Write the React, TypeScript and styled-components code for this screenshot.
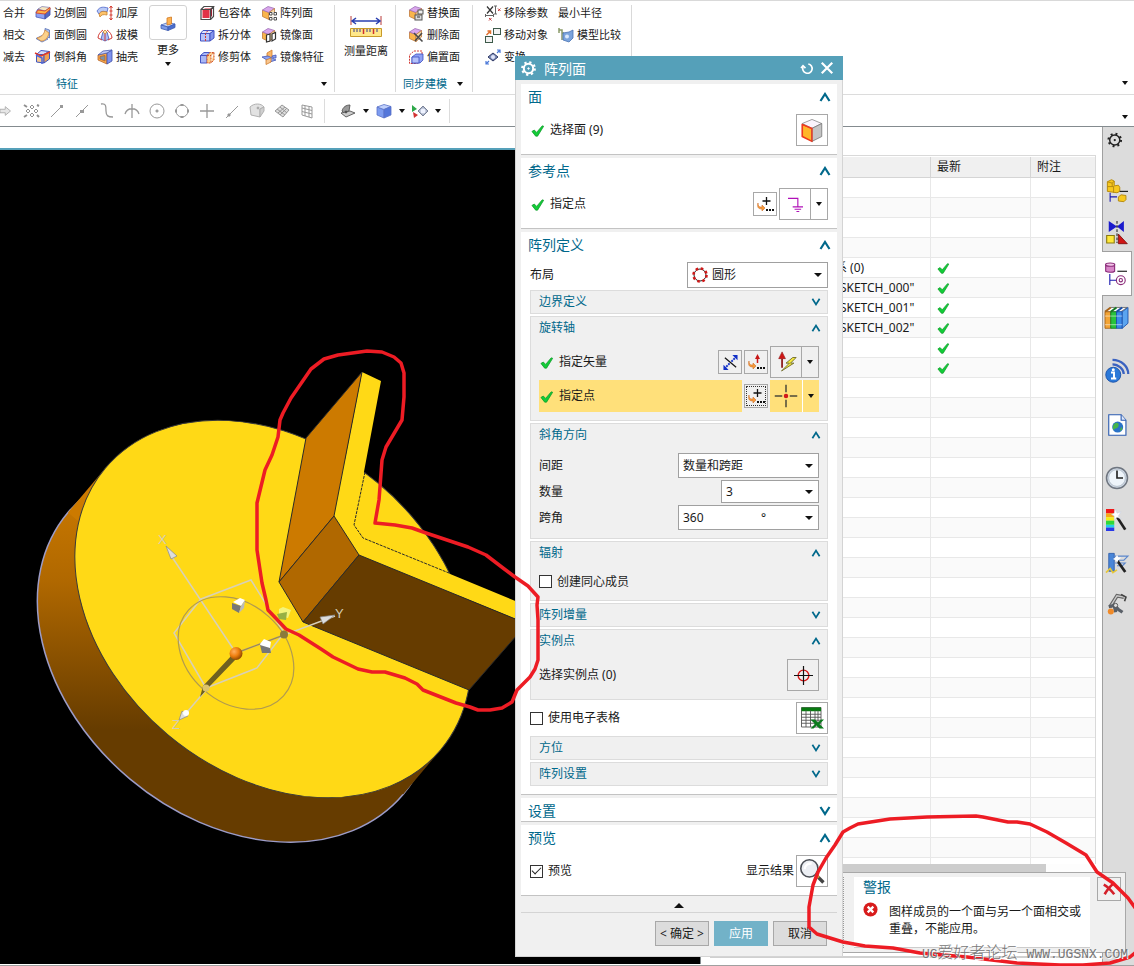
import React from 'react';
import styled, { createGlobalStyle, css } from 'styled-components';

const GlobalStyle = createGlobalStyle`
  *, *::before, *::after { box-sizing: border-box; }
  html, body { margin: 0; padding: 0; }
  body {
    background: #fff;
    color: #1a1a1a;
    font-family: "Noto Sans", "Noto Sans CJK SC", sans-serif;
    font-size: 12px;
    line-height: 16px;
    overflow: hidden;
  }
  button, input, select { font: inherit; color: inherit; margin: 0; padding: 0; }
  svg { display: block; flex: none; }
`;

/* ---------- glyphs ---------- */

type GlyphProps = { name: string; size?: number };

const cube = (front: string, top: string, side: string, line: string) => (
  <g stroke={line} strokeLinejoin="round">
    <path d="M1.5 5.5 9 5.5 9 14 1.5 13Z" fill={front} />
    <path d="M1.5 5.5 6 1.5 14.5 2.5 9 5.5Z" fill={top} />
    <path d="M9 5.5 14.5 2.5 14.5 10 9 14Z" fill={side} />
  </g>
);

const hexCube = (
  <g strokeLinejoin="round" stroke="#c07a3a" strokeWidth=".8">
    <path d="M1.5 5 8 7.5V14.5L1.5 11.5Z" fill="#f9b54c" />
    <path d="M1.5 5 7 1.5 13.5 3.5 8 7.5Z" fill="#d9a6ec" stroke="#a070b8" />
    <path d="M8 7.5 13.5 3.5V10L8 14.5Z" fill="#f5d9a8" />
  </g>
);

const dialogArrow = (
  <g>
    <path d="M1 7C1 11 3 11 5 11V9L8 12 5 15V13C1 13 0 11 1 7Z" fill="#f59a3a" stroke="#d0702a" strokeWidth=".6" />
    <path d="M9 14H11M12 14H14M15 14H17" stroke="#111" strokeWidth="2" />
  </g>
);

const GLYPHS: Record<string, React.ReactNode> = {
  edgeBlend: (
    <g>
      <path d="M1 7 3 4 10 5 10 14 1 12Z" fill="#8fa2f2" stroke="#4a5cb8" strokeWidth=".8" />
      <path d="M10 7 15 3V10L10 14Z" fill="#5468c0" stroke="#3c4ca8" strokeWidth=".8" />
      <path d="M3 4 7 1.5 15 2.5 10 6Z" fill="#f5e6c0" stroke="#8a8ab8" strokeWidth=".8" />
      <path d="M1 8 3 5 10 6 15 2.5V4.5L10 9Z" fill="#ffb24a" stroke="#d4442e" strokeWidth=".9" />
    </g>
  ),
  faceBlend: (
    <g>
      <path d="M10 1.5 14.5 3 14.5 11 10 9Z" fill="#a9c0ee" stroke="#5570b8" strokeWidth=".8" />
      <path d="M1 11.5 7 8.5 13 12 7 15Z" fill="#c6d3f2" stroke="#5570b8" strokeWidth=".8" />
      <path d="M2 11C7 10 9 7 10 3L14 6C13 11 10 14 6 14Z" fill="#fbd18a" stroke="#d58a3a" strokeWidth=".8" />
    </g>
  ),
  chamfer: (
    <g>
      {cube('#f6c88c', '#d5dcf8', '#f0a050', '#3f55c0')}
      <path d="M0 4 6 7 15 3" fill="none" stroke="#e03a2a" strokeWidth="1.5" />
      <path d="M1 6 7 9V15" fill="none" stroke="#4e66d8" strokeWidth="1.5" />
    </g>
  ),
  thicken: (
    <g>
      <path d="M0 6C3 1 7 2 11 3L10 7C6 6 4 6 2 9Z" fill="#b9c9f6" stroke="#4a63c8" strokeWidth=".8" />
      <path d="M2 9C4 6 6 6 10 7V10C6 9 4 10 3 12Z" fill="#ffc46a" stroke="#c9812a" strokeWidth=".8" />
      <path d="M14 1V15M12.5 3 14 1 15.5 3M12.5 13 14 15 15.5 13M12.5 6H15.5M12.5 10H15.5" fill="none" stroke="#d43a2f" />
    </g>
  ),
  draft: (
    <g>
      <path d="M4 12 6 5 10 5 12 12 8 14Z" fill="#aebcf4" stroke="#4357b5" strokeWidth=".8" />
      <path d="M6 5 8 3 10 5 8 7Z" fill="#ffe0a8" stroke="#c98430" strokeWidth=".8" />
      <path d="M6 3C3 5 1 8 1 11L5 13M10 3C13 5 15 8 15 11L11 13M8 7V14" fill="none" stroke="#d23b35" />
    </g>
  ),
  shell: (
    <g strokeWidth=".8">
      <path d="M1 6 10 4V15L1 11Z" fill="#f9a94c" stroke="#b8662a" />
      <path d="M10 4 15 1V12L10 15Z" fill="#7f92ee" stroke="#4050a8" />
      <path d="M1 6 6 2 15 1 10 4Z" fill="#c2ccf8" stroke="#4a5ab0" />
      <path d="M3 7.5 8 6.5V12L3 10Z" fill="#7c93a8" stroke="#b8662a" />
    </g>
  ),
  more: (
    <g strokeWidth=".8">
      <path d="M1 10 8 7.5 15 9 8 12Z" fill="#c6d6fa" stroke="#4a6cc0" />
      <path d="M1 10 8 12V15.5L1 13.5Z" fill="#7d9be8" stroke="#3d5cb0" />
      <path d="M8 12 15 9V12.5L8 15.5Z" fill="#4b6fcf" stroke="#3d5cb0" />
      <path d="M7 3 11.500 2V9L7 10Z" fill="#ffb24f" stroke="#d07a25" />
    </g>
  ),
  bbox: (
    <g>
      <rect x="3.500" y="5" width="7" height="8" fill="#e23347" />
      <path d="M4 5 6 3H13L11 5Z" fill="#f08a96" />
      <path d="M11 5 13 3V11L11 13Z" fill="#a01c30" />
      <path d="M2 4.500H11.500V14.500H2ZM2 4.500 5 1.500H14.500L11.500 4.500M14.500 1.500V11.500L11.500 14.500" fill="none" stroke="#4a4a4a" strokeWidth="1.200" />
    </g>
  ),
  split: (
    <g stroke="#4455c4">
      <path d="M1.5 6.500H11V14H1.500Z" fill="#b8c4fa" />
      <path d="M1.500 6.500 4 3.500H15L11 6.500Z" fill="#dfe5ff" />
      <path d="M11 6.500 15 3.500V11L11 14Z" fill="#8394ec" />
      <path d="M6.500 14V6.500L9 3.500" fill="none" stroke="#d43a2f" strokeDasharray="2 1" />
    </g>
  ),
  trim: (
    <g>
      <path d="M1.500 6.500H8V14H1.500ZM1.500 6.500 5 3.500H11L8 6.500Z" fill="#a9b7f6" stroke="#4455c4" />
      <path d="M8 6.500H12V14H8ZM8 6.500 11 3.500H15L12 6.500M15 3.500V11L12 14" fill="#ffd08a" stroke="#d0552f" strokeDasharray="2 1" />
    </g>
  ),
  patternFace: (
    <g>
      {hexCube}
      <path d="M8 7H16V16H8Z" fill="#fff" opacity=".8" />
      <path d="M8.500 7.500H11V10H8.500ZM13 7.500H15.500V10H13ZM8.500 12.500H11V15H8.500ZM13 12.500H15.500V15H13Z" fill="#fff" stroke="#3c3c3c" strokeWidth=".9" />
    </g>
  ),
  mirrorFace: (
    <g>
      {hexCube}
      <path d="M5.500 8 9 7V14L5.500 15ZM11 7 14.500 5.500V12L11 14Z" fill="#fff" stroke="#333" strokeWidth="1.200" />
    </g>
  ),
  mirrorFeature: (
    <g strokeWidth=".8">
      <path d="M6 4 11 1V8L6 10Z" fill="#fbb868" stroke="#d07c2c" />
      <path d="M1 8 7 7 15 11 9 13Z" fill="#8ea4f0" stroke="#4256b6" />
      <path d="M5 11 10 9V13L5 15.500Z" fill="#f7c58e" stroke="#d07c2c" />
      <path d="M11 7 15 6V9L12 9Z" fill="#8ea4f0" stroke="#4256b6" />
    </g>
  ),
  replaceFace: (
    <g>
      {hexCube}
      <rect x="7" y="10" width="7" height="5" fill="#ddd" stroke="#555" />
      <rect x="10" y="5" width="5" height="4" fill="#eee" stroke="#555" />
      <path d="M9 12H12" stroke="#333" />
    </g>
  ),
  deleteFace: (
    <g>
      {hexCube}
      <path d="M6 6 14.500 14.500M14 6 7 14" stroke="#4a4a4a" strokeWidth="1.600" />
    </g>
  ),
  offsetFace: (
    <g>
      <path d="M1.500 6 6 2H14V10L9 14.500H1.500Z" fill="none" stroke="#d23b35" strokeDasharray="2 1" />
      <path d="M4 8 8 5H15V11L12 14H4Z" fill="#8fa0f4" stroke="#3d4fc0" strokeWidth=".8" />
      <path d="M4 8H11V14H4Z" fill="#b3c0fa" stroke="#3d4fc0" strokeWidth=".8" />
    </g>
  ),
  removeParam: (
    <g fill="none">
      <path d="M2 1.500 8 8.500M8 1.500 2 8.500" stroke="#333" strokeWidth="1.200" />
      <path d="M10.500 1V9M9 1H12M9 9H12M0 10.500H9M.5 9V12M8.500 9V12" stroke="#666" />
      <path d="M13 3.500 15.500 6M15.500 3.500 13 6M4 13 6.500 15.500M6.500 13 4 15.500" stroke="#c63a3a" />
    </g>
  ),
  moveObject: (
    <g>
      <rect x="8.500" y="1.500" width="7" height="6" fill="#f2f2f2" stroke="#3d5a4a" />
      <rect x=".5" y="9.500" width="7" height="6" fill="#f2f2f2" stroke="#3d5a4a" />
      <path d="M1.500 8 5.500 4M2.500 4H5.500V7" fill="none" stroke="#e2702f" strokeWidth="1.500" />
    </g>
  ),
  transform: (
    <g>
      <path d="M3 8 8 4 13 8 8 12Z" fill="#7c8cb8" stroke="#2f3a66" />
      <circle cx="8" cy="8" r="2" fill="#dfe5fa" />
      <path d="M12 4 15 1M12 1H15V4M4 12 1 15M1 12V15H4" fill="none" stroke="#4a78d8" strokeWidth="1.200" />
    </g>
  ),
  compare: (
    <g>
      <path d="M1 3H4V13M1 1V6M4 6H6" stroke="#8a9a6a" fill="none" strokeWidth="1.500" />
      <path d="M5 6 11 5 15 3V11L11 15 5 13Z" fill="#7ba4dd" stroke="#4a73b4" strokeWidth=".8" />
      <circle cx="9" cy="9.500" r="2" fill="#dbe9fb" />
    </g>
  ),
  snapArrow: <path d="M0 6H6V3L12 8 6 13V10H0Z" fill="#e6e6e6" stroke="#aaa" />,
  snapCluster: (
    <g fill="none" stroke="#8f8f8f">
      <path d="M8 2 10 4 8 6 6 4ZM8 10 10 12 8 14 6 12ZM4 6 6 8 4 10 2 8ZM12 6 14 8 12 10 10 8Z" />
      <path d="M0 2 3 4M0 14 3 12M13 2 15 3M15 14 13 12" strokeWidth="2" />
    </g>
  ),
  snapEnd: <g stroke="#999" fill="#8a8a8a"><path d="M2 14 13 3" /><path d="M12 3H13V4H12Z" strokeWidth="2" /></g>,
  snapMid: <g stroke="#999" fill="#8a8a8a"><path d="M2 14 14 2" /><path d="M7 8H9V9H7Z" strokeWidth="2" /></g>,
  snapCurve: <path d="M2 1C7 0 7 3 7 8S9 14 14 14" fill="none" stroke="#999" strokeWidth="1.300" />,
  snapInter: <g stroke="#999" fill="none" strokeWidth="1.300"><path d="M8 1V15M1 11C3 4 13 4 15 11" /></g>,
  snapCenter: <g stroke="#999" fill="none"><circle cx="8" cy="8" r="7" /><path d="M8 6.500V9.500M6.500 8H9.500" strokeWidth="1.500" /></g>,
  snapQuad: <g stroke="#999" fill="none"><circle cx="8" cy="8" r="6" /><path d="M8 1V3M8 13V15M1 8H3M13 8H15" strokeWidth="3" /></g>,
  snapPlus: <path d="M8 1V15M1 8H15" stroke="#999" strokeWidth="1.300" />,
  snapOn: <g stroke="#999" fill="#8a8a8a"><path d="M2 15 14 3" /><path d="M4 11H6V13H4Z" /></g>,
  snapFace: (
    <g fill="#e2e2e2" stroke="#b0b0b0">
      <path d="M1 4C5 0 12 0 15 4L11 6V14L2 12Z" />
      <path d="M11 6 15 4 15 8 11 14Z" fill="#cfcfcf" />
      <circle cx="9" cy="5" r="1" fill="#888" />
    </g>
  ),
  snapMesh: (
    <g fill="#ddd" stroke="#999">
      <path d="M1 8 8 2 15 7 9 14Z" />
      <path d="M3 6 11 12M6 4 13 10M4 10 11 4M6 12 13 5" fill="none" />
    </g>
  ),
  snapGrid: <path d="M3 2 13 4V15L3 12ZM6 3V13M10 3.500V14M3 5 13 7.500M3 8.500 13 11" fill="none" stroke="#999" />,
  viewPlane: (
    <g stroke="#555" strokeWidth=".9">
      <path d="M2 8C3 4 6 2 10 2L9 8 4 10Z" fill="#9a9a9a" />
      <path d="M1 10 10 8 15 10 6 14Z" fill="#ccc" />
      <circle cx="6" cy="9" r="1" fill="#333" />
    </g>
  ),
  blueBox: (
    <g strokeLinejoin="round" stroke="#5a72c8" strokeWidth=".8">
      <path d="M1 4 8 6.500V15L1 12Z" fill="#7d9cf0" />
      <path d="M1 4 8 1.500 15 3.500 8 6.500Z" fill="#c0d0fb" />
      <path d="M8 6.500 15 3.500V12L8 15Z" fill="#5376da" />
    </g>
  ),
  visibility: (
    <g>
      <path d="M0 2 5 6 0 9Z" fill="#2ea84a" />
      <path d="M1 9 6 12 2 15Z" fill="#d23232" />
      <path d="M6 8 11 3 16 8 11 13Z" fill="#aab3c8" stroke="#7a8298" />
      <circle cx="11" cy="8" r="2.500" fill="#eef2ff" />
    </g>
  ),
  check: <path d="M1 9 3.500 7.500 6 10 12 3 13.500 3.500 7 14 5 14Z" fill="#12cc38" stroke="#0d9a28" strokeWidth=".8" strokeLinejoin="round" />,
  ring: (
    <g>
      <circle cx="8" cy="8" r="6" fill="none" stroke="#222" />
      <circle cx="8" cy="8" r="6.500" fill="none" stroke="#d01818" strokeWidth="2.600" strokeDasharray="2.500 2.600" />
    </g>
  ),
  pointDialog: (
    <g>
      <path d="M9.500 1V9M5.500 5H13.500" stroke="#111" strokeWidth="1.300" />
      {dialogArrow}
    </g>
  ),
  vectorDialog: (
    <g>
      <path d="M9.500 2V9" stroke="#c81818" strokeWidth="1.500" />
      <path d="M9.500 0 12 5H7Z" fill="#c81818" />
      {dialogArrow}
    </g>
  ),
  reverse: (
    <g>
      <path d="M2 3 14 13" stroke="#111" strokeWidth="1.300" />
      <path d="M9 7 14 2M7 9 2 14" stroke="#1230c8" strokeWidth="2" strokeDasharray="2 1" />
      <path d="M15.500 0V5.500L10 0ZM.5 16V10.500L6 16Z" fill="#1230c8" />
    </g>
  ),
  inferVector: (
    <g>
      <path d="M4.500 5V13" stroke="#8a1010" strokeWidth="1.500" />
      <path d="M4.500-1 7.500 5H1.500Z" fill="#d01616" stroke="#8a1010" strokeWidth=".5" />
      <path d="M14 4 8 9H11L4 16 15 9H12L17 4Z" fill="#f6ea3c" stroke="#6e6a2a" strokeWidth=".8" />
    </g>
  ),
  inferPoint: (
    <path d="M0 1.500H10.500V10.500M5 10.500H16M7 13H14M9 15.500H12" fill="none" stroke="#b010b8" strokeWidth="1.200" />
  ),
  crossPoint: (
    <g>
      <path d="M8-1V5M8 11V17M-1 8H5M11 8H17" stroke="#4c4a3a" strokeWidth="1.200" />
      <circle cx="8" cy="8" r="1.800" fill="#d41a1a" />
    </g>
  ),
  target: (
    <g fill="none">
      <circle cx="8" cy="8" r="4.500" stroke="#d41a1a" strokeWidth="1.200" />
      <path d="M8 0V16M0 8H16" stroke="#111" />
    </g>
  ),
  faceCube: (
    <g strokeLinejoin="round">
      <path d="M2 4.500 8 7V15L2 12Z" fill="#ffb62a" stroke="#ee3a20" />
      <path d="M2 4 8 1.500 14 4 8 7Z" fill="#faf4fc" stroke="#8a8a8a" strokeWidth=".5" />
      <path d="M8 7 14 4V12L8 15Z" fill="#c4c4c4" stroke="#777" strokeWidth=".5" />
      <path d="M2 4.500 8 7V15" fill="none" stroke="#ee3a20" strokeWidth=".8" />
    </g>
  ),
  sheet: (
    <g>
      <path d="M1 1H14V14H1Z" fill="#fff" stroke="#555" strokeWidth=".6" />
      <path d="M1 1H14V3.500H1Z" fill="#087a10" />
      <path d="M1 5.500H14M1 7.500H14M1 9.500H14M1 11.500H14M4 3V14M7 3V14M10 3V14M12 3V14" stroke="#555" strokeWidth=".6" />
      <path d="M7 9H10L12 11 14 9H16L13 12 16 15H13L11 13 9 15H7L10 12Z" fill="#0a7a1c" />
    </g>
  ),
  magnifier: (
    <g>
      <path d="M10.500 10.500 15 15" stroke="#444" strokeWidth="2.200" />
      <path d="M10 10 12 12" stroke="#c9a23a" strokeWidth="2" />
      <circle cx="6" cy="6" r="5.500" fill="#eceff4" stroke="#4a4e55" />
      <path d="M3 6.500C3 4 5.500 2.500 7.500 3" fill="none" stroke="#fff" strokeWidth="1.500" />
    </g>
  ),
  assembly: (
    <g>
      <path d="M1 2 4 .5 6 1.500V5L9 4.500 10 6V9L8 10 1 9Z" fill="#f7c81e" stroke="#b58a10" strokeWidth=".7" />
      <path d="M1 5.500H5.500V10M5.500 5.500 6 5M1 2 4.500 3V5.500M4.500 3 6 1.500" fill="none" stroke="#b58a10" strokeWidth=".7" />
      <path d="M10 9H16" stroke="#111" strokeWidth=".8" />
      <path d="M3 10V16.500M3 13H8" stroke="#1a1ab0" strokeWidth=".8" />
      <path d="M9 13 11 11.500 14.500 12V15L13 16.500 9 16Z" fill="#f7c81e" stroke="#b58a10" strokeWidth=".7" />
    </g>
  ),
  constraint: (
    <g>
      <path d="M2 0 8 4 2 8ZM13 0 8 4 13 8Z" fill="#1a1acc" />
      <path d="M8 0V16" stroke="#111" strokeWidth=".7" strokeDasharray="2 1" />
      <path d="M.5 10.500H6V16H.5Z" fill="#ffe83a" stroke="#8a7a10" strokeWidth=".8" />
      <path d="M9 9.500 15.500 16.500H9Z" fill="#d01616" stroke="#7a0c0c" strokeWidth=".6" />
    </g>
  ),
  partNav: (
    <g>
      <path d="M.5 1V6C2 7 6 7 7 6V1Z" fill="#d886c8" stroke="#8a2a78" strokeWidth=".8" />
      <ellipse cx="3.750" cy="1.200" rx="3.250" ry="1.200" fill="#f2c4e8" stroke="#8a2a78" strokeWidth=".8" />
      <path d="M9 6H16" stroke="#111" strokeWidth=".8" />
      <path d="M3.500 8V16M3.500 12.500H8" stroke="#1a1ab0" strokeWidth=".8" />
      <circle cx="11.500" cy="12.500" r="3.200" fill="none" stroke="#8a2a78" strokeWidth=".8" />
      <circle cx="11.500" cy="12.500" r="1.200" fill="none" stroke="#8a2a78" strokeWidth=".8" />
    </g>
  ),
  books: (
    <g strokeWidth=".6">
      <path d="M4 1H15.500L11 4H0Z" fill="#fff" stroke="#666" />
      <path d="M0 4H4V15.500H0Z" fill="#f2a436" stroke="#a8641a" />
      <path d="M4 4H8V15.500H4Z" fill="#28c23c" stroke="#147a22" />
      <path d="M8 4H12V15.500H8Z" fill="#3a8ae8" stroke="#1a4ea8" />
      <path d="M12 4 16 1V12L12 15.500Z" fill="#5aa4f0" stroke="#1a4ea8" />
      <path d="M0 4 4 1" stroke="#a8641a" strokeWidth="1.400" />
      <path d="M4 4 8 1" stroke="#147a22" strokeWidth="1.400" />
      <path d="M8 4 12 1" stroke="#1a4ea8" strokeWidth="1.400" />
      <path d="M0 7H12M0 13H12" stroke="#fff" opacity=".6" />
    </g>
  ),
  infoWave: (
    <g>
      <path d="M5 .5C11 .5 15.500 5 15.500 10M5 3.500C9 3.500 12.500 7 12.500 10" fill="none" stroke="#3a62c0" strokeWidth="1.500" />
      <circle cx="5.500" cy="10.500" r="5" fill="#2a78d8" stroke="#1a50a8" strokeWidth=".6" />
      <path d="M4 9H6V13H7M4 13H7.500" fill="none" stroke="#fff" strokeWidth="1.300" />
      <circle cx="5.500" cy="7.200" r="1" fill="#fff" />
    </g>
  ),
  webDoc: (
    <g>
      <path d="M2 .5H11L14.500 4.500V15.500H2Z" fill="#fff" stroke="#2a5ab0" strokeWidth=".8" />
      <path d="M11 .5V4.500H14.500" fill="#dfe8f8" stroke="#2a5ab0" strokeWidth=".8" />
      <circle cx="8.500" cy="9.500" r="4" fill="#2a72c8" />
      <path d="M6 7C8 5.500 10 7 9 9S6 10 5.500 12C4.500 10 5 8 6 7ZM11 9 12 11 10 12.500Z" fill="#46b44a" />
    </g>
  ),
  clock: (
    <g>
      <circle cx="8" cy="8" r="7" fill="#cfd8e4" stroke="#6f7680" />
      <circle cx="8" cy="8" r="5.600" fill="#eef4fa" stroke="#a8b4c0" strokeWidth=".5" />
      <path d="M8 3V8H12" fill="none" stroke="#222" strokeWidth="1.100" />
    </g>
  ),
  spectrum: (
    <g>
      <path d="M0 0H6V3.200H0Z" fill="#f01818" />
      <path d="M0 3.200H6V6H0Z" fill="#f8a818" />
      <path d="M0 6H6V8.500H0Z" fill="#f4f018" />
      <path d="M0 8.500H6V11.500H0Z" fill="#30d838" />
      <path d="M0 11.500H6V13.500H0Z" fill="#20d0e8" />
      <path d="M0 13.500H6V16H0Z" fill="#2838e8" />
      <path d="M7.500 5 14 15" stroke="#222" strokeWidth="2" />
      <path d="M7 0 8 3 11 2 9 5 11 7 8 6 6 8 6 5 4 4 6 3Z" fill="#fff" stroke="#c8d0e0" strokeWidth=".4" />
    </g>
  ),
  wandTower: (
    <g>
      <path d="M2 1H6V14H2Z" fill="#4a86d8" stroke="#2a5aa8" strokeWidth=".6" />
      <path d="M6 3H16L13 6H8M6 8H14L12 10H8" fill="none" stroke="#5a86cc" strokeWidth=".8" />
      <path d="M0 15 3 12 5 15 8 13" stroke="#e8c838" fill="none" strokeWidth="1.200" />
      <path d="M8 6 14 14.500" stroke="#222" strokeWidth="2" />
      <path d="M8 2 9 4 11 4 9 6 8 8 7 6 5 5 7 4Z" fill="#fff" />
    </g>
  ),
  robot: (
    <g>
      <path d="M3 10 8 2 13 3" fill="none" stroke="#666" strokeWidth="2.600" />
      <path d="M3 10 8 2 13 3" fill="none" stroke="#ccc" strokeWidth="1" />
      <path d="M11 1 14.500 3 13.500 6" fill="none" stroke="#444" strokeWidth="1.200" />
      <path d="M2 10 6 9 9 12 12 14M6 9 7 14" fill="none" stroke="#5a6068" strokeWidth="2.400" />
      <circle cx="3.500" cy="13.500" r="2.200" fill="#f08a28" />
      <circle cx="7" cy="9" r="1.500" fill="#ddd" stroke="#444" strokeWidth=".6" />
    </g>
  ),
  error: (
    <g>
      <circle cx="8" cy="8" r="7.500" fill="#d81c1c" />
      <path d="M5 5 11 11M11 5 5 11" stroke="#fff" strokeWidth="2.500" />
    </g>
  ),
  redX: <path d="M2 3C6 5 10 9 14 14M13 2C9 5 6 9 3 14" fill="none" stroke="#d4202a" strokeWidth="3" />,
  gear: (
    <g fill="none" stroke="currentColor">
      <circle cx="8" cy="8" r="5" strokeWidth="2.200" />
      <circle cx="8" cy="8" r="6.800" strokeWidth="2.200" strokeDasharray="2.400 2.940" />
      <circle cx="8" cy="8" r=".8" fill="currentColor" />
    </g>
  ),
  gearThin: (
    <g fill="none" stroke="#222">
      <circle cx="6" cy="8" r="4.500" strokeWidth="1.300" />
      <circle cx="6" cy="8" r="5.500" strokeWidth="2" strokeDasharray="1.700 2.620" />
      <circle cx="6" cy="8" r=".5" fill="#222" />
    </g>
  ),
  reset: (
    <g fill="none" stroke="#fff" strokeWidth="2">
      <path d="M9 2.400A5.800 5.800 0 1 1 2.500 6" />
      <path d="M0 7.500 2.500 4.500 5.500 7.500" />
    </g>
  ),
  close: <path d="M2 2 14 14M14 2 2 14" stroke="#fff" strokeWidth="2.500" />,
};

const Glyph = ({ name, size = 16 }: GlyphProps) => (
  <svg width={size} height={size} viewBox="0 0 16 16" aria-hidden="true" overflow="visible">
    {GLYPHS[name]}
  </svg>
);

const Chevron = ({ open, small }: { open: boolean; small?: boolean }) => (
  <svg width={small ? 10 : 12} height={small ? 8 : 10} viewBox="0 0 12 10" aria-hidden="true">
    <path d={open ? 'M1.500 9 6 2 10.500 9' : 'M1.500 1 6 8 10.500 1'} fill="none" stroke="#00688b" strokeWidth="2.200" />
  </svg>
);

const Caret = styled.span<{ $wide?: boolean }>`
  display: block;
  flex: none;
  width: 0;
  height: 0;
  border: solid transparent;
  border-width: 4px ${p => (p.$wide ? 4 : 3)}px 0;
  border-top-color: #111;
`;

/* ---------- application frame ---------- */

const App = styled.div`
  position: relative;
  display: flex;
  flex-direction: column;
  height: 100vh;
  overflow: hidden;
`;

const Ribbon = styled.header`
  display: flex;
  height: 95px;
  flex: none;
  padding: 4px 0 2px;
  border-top: 1px solid #d9d9d9;
  border-bottom: 1px solid #dcdcdc;
  font-size: 11px;
`;

const RibbonGroup = styled.section<{ $left: number; $right?: number }>`
  display: flex;
  flex-direction: column;
  justify-content: space-between;
  padding: 0 ${p => p.$right ?? 10}px 0 ${p => p.$left}px;
  border-right: 1px solid #d9d9d9;
`;

const Commands = styled.div`
  display: flex;
  gap: 10px;
`;

const CommandColumn = styled.div`
  display: flex;
  flex-direction: column;
`;

const Command = styled.button`
  display: flex;
  align-items: center;
  gap: 3px;
  height: 22px;
  padding-bottom: 6px;
  border: 0;
  background: none;
  white-space: nowrap;
`;

const GroupTitle = styled.div`
  display: flex;
  align-items: center;
  height: 16px;
  padding-left: 53px;
  color: #00688b;
  white-space: nowrap;

  ${Caret} { margin-left: auto; margin-right: -3px; }
`;

const SyncTitle = styled.div`
  display: flex;
  align-items: center;
  justify-content: space-between;
  width: 60px;
  height: 16px;
  margin-left: -5px;
  color: #00688b;
  white-space: nowrap;
`;

const MoreButton = styled.button`
  display: flex;
  flex-direction: column;
  align-items: center;
  width: 38px;
  margin: 0 2px 0 1px;
  border: 0;
  background: none;

  ${Caret} { margin-top: 4px; }
`;

const MoreTile = styled.span`
  display: grid;
  place-items: center;
  width: 38px;
  height: 35px;
  margin-bottom: 2px;
  border: 1px solid #d2d2d2;
  border-radius: 3px;
`;

const MeasureButton = styled.button`
  display: flex;
  flex-direction: column;
  align-items: center;
  gap: 3px;
  padding-top: 11px;
  border: 0;
  background: none;
  white-space: nowrap;
`;

const BarEnd = styled.div`
  display: flex;
  flex: 1;
  align-self: stretch;
  align-items: flex-end;
  justify-content: flex-end;
  padding: 0 6px 7px 0;
`;

const SnapBar = styled.nav`
  display: flex;
  align-items: center;
  height: 32px;
  flex: none;
  border-bottom: 1px solid #848b8f;
`;

const SnapStart = styled.button`
  width: 19px;
  border: 0;
  background: none;
`;

const SnapButton = styled.button<{ $wide?: boolean }>`
  display: flex;
  align-items: center;
  justify-content: center;
  gap: 7px;
  width: ${p => (p.$wide ? 36 : 25)}px;
  height: 24px;
  border: 0;
  background: none;
`;

const SnapSets = styled.div`
  display: flex;
  margin-left: 5px;
  padding: 0 5px 0 11px;
  border: solid #dcdcdc;
  border-width: 0 1px;
`;

const Main = styled.main`
  display: flex;
  flex: 1;
  min-height: 0;
  padding-bottom: 1px;
  border-bottom: 1px solid #a0a0a0;
`;

const Viewport = styled.section`
  display: flex;
  flex: 1;
  min-width: 0;
  padding-top: 21px;
`;

const Canvas = styled.div`
  flex: 1;
  min-width: 0;
  overflow: hidden;
  border-top: 2px solid #55a0b9;
  background: #000;
`;

/* ---------- part navigator ---------- */

const Navigator = styled.section`
  display: flex;
  flex-direction: column;
  width: 402px;
  flex: none;
  padding: 28px 6px 0 9px;
  border-left: 1px solid #848b8f;
`;

const TreeFrame = styled.div`
  flex: 1;
  min-height: 0;
  overflow: hidden;
  padding-top: 1px;
  border: solid #d9d9d9;
  border-width: 1px 1px 0 0;
`;

const Tree = styled.table`
  width: 100%;
  border-collapse: separate;
  border-spacing: 0;
  table-layout: fixed;

  th, td {
    height: 20px;
    padding: 0 0 0 6px;
    border: solid #e8e8e8;
    border-width: 0 1px 1px 0;
    line-height: 16px;
    text-align: left;
    font-weight: 400;
    white-space: nowrap;
  }
  th { height: 21px; background: #f0f0f0; border-color: #d5d5d5; }
  th:last-child, td:last-child { border-right: 0; }
  td:first-child { padding-left: 125px; }
  tbody tr:nth-child(even) { background: #fafafa; }
`;

const ScrollTrack = styled.div`
  height: 8px;
  margin-right: 5px;
  flex: none;
  background: #fdfdfd;
`;

const ScrollThumb = styled.div`
  width: 336px;
  height: 8px;
  background: #cdcdcd;
`;

const NavigatorFoot = styled.div`
  display: flex;
  flex-direction: column;
  justify-content: flex-end;
  height: 92px;
  flex: none;

  &::after {
    content: "";
    height: 8px;
    border-top: 2px solid #d0d0d0;
  }
`;

const ResourceBar = styled.nav`
  display: flex;
  flex-direction: column;
  width: 32px;
  flex: none;
  margin-bottom: -1px;
  background: #dcdcdc;
  box-shadow: inset 1px 0 0 #a0a0a0;
`;

const ResourceTab = styled.button<{ $gap: number; $active?: boolean }>`
  display: flex;
  align-items: center;
  justify-content: center;
  width: 30px;
  height: 24px;
  margin-top: ${p => p.$gap}px;
  padding-right: 1px;
  border: 0;
  background: none;
  ${p => p.$active && css`
    height: 45px;
    background: #fff;
    border: solid #a0a0a0;
    border-width: 1px 1px 1px 0;
  `}
`;

/* ---------- dialog ---------- */

const Dialog = styled.form`
  position: absolute;
  left: 515px;
  top: 56px;
  width: 328px;
  background: #f0f0f0;
  box-shadow: inset 0 0 0 1px #d4d4d4;
`;

const TitleBar = styled.div`
  display: flex;
  align-items: center;
  height: 24px;
  padding: 0 6px 0 6px;
  background: #55a0b9;
  color: #fff;
  font-size: 14px;
`;

const TitleText = styled.h1`
  flex: 1;
  margin: 0 0 0 8px;
  padding-top: 2px;
  font: inherit;
`;

const TitleButton = styled.button`
  display: grid;
  place-items: center;
  width: 20px;
  height: 20px;
  border: 0;
  background: none;
`;

const Sections = styled.div`
  display: flex;
  flex-direction: column;
  gap: 3px;
  padding: 4px 6px 0;
`;

const SectionBox = styled.section`
  background: #fff;
  border-bottom: 1px solid #c3c3c3;
`;

const SectionHead = styled.button`
  display: flex;
  align-items: center;
  justify-content: space-between;
  width: 100%;
  height: 23px;
  padding: 3px 6px 0 7px;
  border: 0;
  background: none;
  color: #00688b;
  font-size: 14px;
`;

const SectionBody = styled.div`
  display: flex;
  flex-direction: column;
  gap: 2px;
  padding: 7px 9px 8px;
`;

const GroupBox = styled.section`
  border: 1px solid #dcdcdc;
  background: #f0f0f0;
`;

const GroupHead = styled.button`
  display: flex;
  align-items: center;
  justify-content: space-between;
  width: 100%;
  height: 22px;
  padding: 0 6px 0 8px;
  border: 0;
  background: none;
  color: #00688b;
`;

const GroupBody = styled.div`
  display: flex;
  flex-direction: column;
  gap: 2px;
  padding: 7px 8px 8px;
`;

const Row = styled.div<{ $h?: number }>`
  display: flex;
  align-items: center;
  gap: 2px;
  height: ${p => p.$h ?? 32}px;
`;

const RowLabel = styled.div<{ $marked?: boolean }>`
  display: flex;
  flex: 1;
  align-items: center;
  align-self: stretch;
  gap: 4px;
  background: ${p => (p.$marked ? '#ffe07a' : 'none')};

  svg { margin-left: 1px; }
`;

const ToolButton = styled.button<{ $size?: number; $plain?: boolean }>`
  display: grid;
  place-items: center;
  width: ${p => p.$size ?? 24}px;
  height: ${p => p.$size ?? 24}px;
  flex: none;
  border: 1px solid #a8a8a8;
  background: ${p => (p.$plain ? 'transparent' : '#fff')};
`;

const FocusRing = styled.span`
  display: grid;
  place-items: center;
  width: 20px;
  height: 20px;
  border: 1px dotted #333;
`;

const Split = styled.div<{ $marked?: boolean; $plain?: boolean }>`
  display: flex;
  width: 49px;
  height: 32px;
  flex: none;
  border: ${p => (p.$marked ? '0' : '1px solid #a8a8a8')};
  background: ${p => (p.$marked ? '#ffe07a' : p.$plain ? 'transparent' : '#fff')};

  button {
    display: grid;
    place-items: center;
    border: 0;
    background: none;
  }
  button:first-child { flex: 1; }
  button:last-child {
    width: 17px;
    border-left: 1px solid ${p => (p.$marked ? '#fff' : '#a8a8a8')};
  }
`;

const Combo = styled.div<{ $w: number; $h: number }>`
  display: flex;
  align-items: center;
  gap: 4px;
  width: ${p => p.$w}px;
  height: ${p => p.$h}px;
  padding: 0 5px 0 4px;
  border: 1px solid #a0a0a0;
  background: #fff;

  select, input {
    flex: 1;
    min-width: 0;
    height: 20px;
    border: 0;
    outline: 0;
    background: none;
    appearance: none;
  }
`;

const Unit = styled.span`
  width: 40px;
`;

const CheckLabel = styled.label`
  display: flex;
  flex: 1;
  align-items: center;
  gap: 5px;
`;

const CheckInput = styled.input`
  display: grid;
  place-items: center;
  width: 13px;
  height: 13px;
  border: 1px solid #333;
  background: #fff;
  appearance: none;

  &:checked::after {
    content: "";
    width: 9px;
    height: 5px;
    margin-top: -3px;
    border: solid #222;
    border-width: 0 0 1px 1px;
    transform: rotate(-45deg);
  }
`;

const Collapse = styled.button`
  display: grid;
  place-items: center;
  width: 316px;
  height: 17px;
  margin: 0 6px;
  padding-top: 3px;
  border: 0;
  border-bottom: 1px solid #d4d4d4;
  background: none;
`;

const UpCaret = styled.span`
  border: solid transparent;
  border-width: 0 5px 5px;
  border-bottom-color: #111;
`;

const Actions = styled.div`
  display: flex;
  justify-content: flex-end;
  gap: 5px;
  padding: 8px 16px 11px;
`;

const ActionButton = styled.button<{ $primary?: boolean }>`
  width: 54px;
  height: 25px;
  border: 1px solid ${p => (p.$primary ? '#72b2c8' : '#a8a8a8')};
  background: ${p => (p.$primary ? '#72b2c8' : '#dcdcdc')};
  color: ${p => (p.$primary ? '#fff' : '#1a1a1a')};
  white-space: nowrap;
`;

/* ---------- alert ---------- */

const Alert = styled.aside`
  position: absolute;
  right: 8px;
  bottom: 13px;
  display: flex;
  width: 283px;
  height: 81px;
  padding: 4px 4px 4px 0;
  border: solid #a8a8a8;
  border-width: 1px 1px 1px 0;
  background: #f0f0f0;
`;

const AlertGrip = styled.div`
  width: 11px;
  border-left: 1px dotted #999;
`;

const AlertCard = styled.div`
  width: 236px;
  height: 71px;
  margin-right: 7px;
  padding: 1px 8px 0 9px;
  background: #fff;
  border-bottom: 1px solid #ccc;
`;

const AlertTitle = styled.h2`
  margin: 0 0 6px;
  color: #00688b;
  font-size: 14px;
  font-weight: 400;
  line-height: 18px;
`;

const AlertMessage = styled.div`
  display: flex;
  gap: 11px;
  line-height: 17px;

  p { margin: 0; width: 200px; padding-top: 1px; }
`;

const Overlay = styled.div`
  position: absolute;
  left: 0;
  top: 0;
  pointer-events: none;
`;

const Watermark = styled.div`
  position: absolute;
  right: 6px;
  bottom: 2px;
  display: flex;
  align-items: center;
  gap: 9px;
  color: #777;
  font-family: "Liberation Mono", "Noto Sans CJK SC", monospace;
  font-size: 13px;
  line-height: 18px;
  text-shadow: 1px 1px 0 #fff;
  pointer-events: none;

  b { font-size: 16px; font-weight: 300; }
`;

/* ---------- pieces ---------- */

const Section = ({ title, children }: { title: string; children?: React.ReactNode }) => (
  <SectionBox>
    <SectionHead type="button">{title}<Chevron open={!!children} /></SectionHead>
    {children && <SectionBody>{children}</SectionBody>}
  </SectionBox>
);

const Group = ({ title, children }: { title: string; children?: React.ReactNode }) => (
  <GroupBox>
    <GroupHead type="button">{title}<Chevron open={!!children} small /></GroupHead>
    {children && <GroupBody>{children}</GroupBody>}
  </GroupBox>
);

const CommandList = ({ items }: { items: [string, string?][] }) => (
  <CommandColumn>
    {items.map(([label, icon]) => (
      <Command key={label} type="button">{icon && <Glyph name={icon} />}{label}</Command>
    ))}
  </CommandColumn>
);

type SplitProps = { icon: string; label: string; size: number; marked?: boolean; plain?: boolean };

const SplitButton = ({ icon, label, size, marked, plain }: SplitProps) => (
  <Split $marked={marked} $plain={plain}>
    <button type="button" aria-label={label}><Glyph name={icon} size={size} /></button>
    <button type="button" aria-label={`${label} ▾`}><Caret /></button>
  </Split>
);

const Model = () => (
  <svg width="700" height="808" viewBox="0 150 700 808" aria-hidden="true">
    <defs>
      <linearGradient id="side" gradientUnits="userSpaceOnUse" x1="60" y1="580" x2="215" y2="770">
        <stop offset="0" stopColor="#cc7a00" />
        <stop offset=".4" stopColor="#b06800" />
        <stop offset="1" stopColor="#663c00" />
      </linearGradient>
      <radialGradient id="ball" cx=".35" cy=".35" r=".7">
        <stop offset="0" stopColor="#ffb060" />
        <stop offset=".5" stopColor="#f08010" />
        <stop offset="1" stopColor="#8a4400" />
      </radialGradient>
    </defs>
    <ellipse cx="235.500" cy="653.500" rx="219" ry="164" transform="rotate(40 235.500 653.500)" fill="url(#side)" stroke="#9c9cc8" strokeWidth="1.500" />
    <path d="M105.500 468 68 512.500 403 794.500 440.500 750Z" fill="url(#side)" />
    <ellipse cx="273" cy="609" rx="219" ry="164" transform="rotate(40 273 609)" fill="#ffd916" stroke="#3a3a3a" />
    <g stroke="#2a2a2a" strokeLinejoin="round">
      <path d="M362 372 381 381 354 525 363 538 530 607 530 625 359 555 334 516Z" fill="#ffd916" stroke="none" />
      <path d="M362 372 306 438 279 582 334 516Z" fill="#cc7a00" />
      <path d="M334 516 279 582 303 622 359 555Z" fill="#b06800" />
      <path d="M359 555 303 622 469 690 530 620 530 625Z" fill="#663c00" />
      <path d="M365 472 354 525 363 538 449 573" fill="none" strokeDasharray="3 1" />
    </g>
    <g fill="none" stroke="#d8d0b8" strokeWidth="1.500">
      <path d="M236 653 168 551M236 653 335 616M201 599 251 580 284 633 257 668 206 688 174 633Z" />
      <ellipse cx="236" cy="653" rx="64" ry="49" transform="rotate(42 236 653)" stroke="#b09a50" strokeWidth="1.200" />
      <path d="M236 653 284 635" stroke="#a08c50" />
      <path d="M206 690 181 719" />
    </g>
    <path d="M232 655 236 659 209 687 200 697 203 686Z" fill="#6e6020" />
    <path d="M166 546 177 556 171 559ZM335 615 323 624 320 617ZM179 720 182 711 188 716Z" fill="#ddd" stroke="#888" strokeWidth=".7" />
    <circle cx="186" cy="713" r="3" fill="#fff" />
    <g strokeLinejoin="round">
      <path d="M233 602 240 598 245 600 241 606ZM260 644 264 639 271 642 270 648 262 649Z" fill="#fff" />
      <path d="M232 603 241 606 239 613 232 609ZM260 645 262 653 271 653 270 648Z" fill="#777" />
      <path d="M241 606 245 600 244 608 239 613Z" fill="#bbb" />
      <path d="M279 609 283 607 291 610 288 618 279 616Z" fill="#f4f47a" />
      <path d="M277 614 287 612 286 620 279 619Z" fill="#96b044" />
    </g>
    <circle cx="284" cy="634.500" r="4" fill="#8a7a3c" />
    <circle cx="206" cy="688" r="3.500" fill="#dcc46a" />
    <circle cx="236" cy="653.500" r="6.500" fill="url(#ball)" />
    <g fill="#d4ccb4" fontFamily="Liberation Sans, sans-serif" fontSize="13">
      <text x="158" y="544">X</text>
      <text x="335" y="618">Y</text>
      <text x="172" y="729">Z</text>
    </g>
  </svg>
);

const Markup = () => (
  <Overlay>
    <svg width="1134" height="966" viewBox="0 0 1134 966" aria-hidden="true">
      <g fill="none" stroke="#ed1c24" strokeWidth="3.500" strokeLinejoin="round" strokeLinecap="round">
        <path d="M382 352 367 351 338 355 324 359 311 369 291 398 283 413 280 420 278 437 272 455 265 470 257 503 257 550 262 583 266 600 268 610 286 629 299 635 321 649 333 657 358 669 372 672 385 672 405 678 417 684 423 690 456 703 470 707 478 710 490 710 502 708 512 702 517 690 530 677 535 669 538 660 538 620 537 605 538 597 528 586 515 577 503 568 486 555 468 547 450 541 426 533 412 528 395 525 375 523 379 500 380 487 382 460 386 447 402 420 404 397 404 373 401 363 394 357Z" />
        <path d="M1136 909 1128 898 1113 883 1097 872 1086 855 1066 843 1047 832 1030 824 1017 822 1008 822 983 817 976 816 927 817 890 819 858 824 850 828 843 832 835 845 826 858 818 872 813 885 809 907 809 927 817 934 843 942 865 946 893 948 920 953 967 957 1017 963 1060 965 1083 965 1110 963 1130 957 1136 952" />
      </g>
    </svg>
  </Overlay>
);

const SNAPS: [string, string][] = [
  ['snapCluster', '启用捕捉点'], ['snapEnd', '端点'], ['snapMid', '中点'], ['snapCurve', '控制点'],
  ['snapInter', '交点'], ['snapCenter', '圆弧中心'], ['snapQuad', '象限点'], ['snapPlus', '现有点'],
  ['snapOn', '曲线上的点'], ['snapFace', '面上的点'], ['snapMesh', '小平面'], ['snapGrid', '栅格'],
];

/* icon, space above the tab, icon size */
const RESOURCES: [string, number, number][] = [
  ['gearThin', 1, 18], ['assembly', 26, 22], ['constraint', 18, 22], ['partNav', 7, 22], ['books', 9, 23],
  ['infoWave', 30, 24], ['webDoc', 30, 22], ['clock', 29, 24], ['spectrum', 18, 22], ['wandTower', 19, 22], ['robot', 17, 22],
];

const TREE_ROWS = Array.from({ length: 36 }, (_, i) => ({
  name: ['系 (0)', '"SKETCH_000"', '"SKETCH_001"', '"SKETCH_002"'][i - 4] ?? '',
  current: i >= 4 && i <= 9,
}));

export default function PatternFaceScreen() {
  return (
    <App>
      <GlobalStyle />
      <Ribbon>
        <RibbonGroup $left={3}>
          <Commands>
            <CommandList items={[['合并'], ['相交'], ['减去']]} />
            <CommandList items={[['边倒圆', 'edgeBlend'], ['面倒圆', 'faceBlend'], ['倒斜角', 'chamfer']]} />
            <CommandList items={[['加厚', 'thicken'], ['拔模', 'draft'], ['抽壳', 'shell']]} />
            <MoreButton type="button"><MoreTile><Glyph name="more" /></MoreTile>更多<Caret /></MoreButton>
            <CommandList items={[['包容体', 'bbox'], ['拆分体', 'split'], ['修剪体', 'trim']]} />
            <CommandList items={[['阵列面', 'patternFace'], ['镜像面', 'mirrorFace'], ['镜像特征', 'mirrorFeature']]} />
          </Commands>
          <GroupTitle>特征<Caret /></GroupTitle>
        </RibbonGroup>
        <RibbonGroup $left={9} $right={7}>
          <MeasureButton type="button">
            <svg width="32" height="24" viewBox="0 0 32 24" aria-hidden="true">
              <path d="M1 0V9M31 0V9" stroke="#b83a3a" />
              <path d="M2 5H30M6 2 2 5 6 8M26 2 30 5 26 8" fill="none" stroke="#2a3fb0" strokeWidth="1.500" />
              <path d="M.5 12.500H31.500V20.500H.5Z" fill="#ffe88a" stroke="#c89a2a" />
              <path d="M4 13V16M7 13V16M10 13V16M17 13V16M20 13V16M27 13V16" stroke="#3a3a8a" />
              <path d="M13.500 13V18M23.500 13V18" stroke="#d03030" strokeWidth="1.500" />
            </svg>
            测量距离
          </MeasureButton>
        </RibbonGroup>
        <RibbonGroup $left={12} $right={9}>
          <CommandList items={[['替换面', 'replaceFace'], ['删除面', 'deleteFace'], ['偏置面', 'offsetFace']]} />
          <SyncTitle>同步建模<Caret /></SyncTitle>
        </RibbonGroup>
        <RibbonGroup $left={12}>
          <Commands>
            <CommandList items={[['移除参数', 'removeParam'], ['移动对象', 'moveObject'], ['变换', 'transform']]} />
            <CommandList items={[['最小半径'], ['模型比较', 'compare']]} />
          </Commands>
        </RibbonGroup>
        <BarEnd><Caret /></BarEnd>
      </Ribbon>

      <SnapBar>
        <SnapStart type="button" aria-label="捕捉"><Glyph name="snapArrow" size={14} /></SnapStart>
        {SNAPS.map(([icon, label]) => (
          <SnapButton key={icon} type="button" aria-label={label}><Glyph name={icon} /></SnapButton>
        ))}
        <SnapSets>
          {['viewPlane', 'blueBox', 'visibility'].map(icon => (
            <SnapButton key={icon} type="button" $wide aria-label={icon}><Glyph name={icon} /><Caret /></SnapButton>
          ))}
        </SnapSets>
        <BarEnd><Caret /></BarEnd>
      </SnapBar>

      <Main>
        <Viewport>
          <Canvas><Model /></Canvas>
        </Viewport>
        <Navigator>
          <TreeFrame>
            <Tree>
              <colgroup><col /><col width="100" /><col width="64" /></colgroup>
              <thead><tr><th /><th>最新</th><th>附注</th></tr></thead>
              <tbody>
                {TREE_ROWS.map((row, i) => (
                  <tr key={i}>
                    <td>{row.name}</td>
                    <td>{row.current && <Glyph name="check" size={14} />}</td>
                    <td />
                  </tr>
                ))}
              </tbody>
            </Tree>
          </TreeFrame>
          <ScrollTrack><ScrollThumb /></ScrollTrack>
          <NavigatorFoot />
        </Navigator>
        <ResourceBar>
          {RESOURCES.map(([icon, gap, size]) => (
            <ResourceTab key={icon} type="button" $gap={gap} $active={icon === 'partNav'} aria-label={icon}>
              <Glyph name={icon} size={size} />
            </ResourceTab>
          ))}
        </ResourceBar>
      </Main>

      <Alert>
        <AlertGrip />
        <AlertCard>
          <AlertTitle>警报</AlertTitle>
          <AlertMessage>
            <Glyph name="error" size={15} />
            <p>图样成员的一个面与另一个面相交或重叠，不能应用。</p>
          </AlertMessage>
        </AlertCard>
        <ToolButton type="button" $plain aria-label="关闭"><Glyph name="redX" size={14} /></ToolButton>
      </Alert>

      <Dialog onSubmit={e => e.preventDefault()}>
        <TitleBar>
          <Glyph name="gear" size={15} />
          <TitleText>阵列面</TitleText>
          <TitleButton type="button" aria-label="重置"><Glyph name="reset" size={13} /></TitleButton>
          <TitleButton type="button" aria-label="关闭"><Glyph name="close" size={14} /></TitleButton>
        </TitleBar>
        <Sections>
          <Section title="面">
            <Row>
              <RowLabel><Glyph name="check" size={15} />选择面 (9)</RowLabel>
              <ToolButton type="button" $size={32} aria-label="选择面"><Glyph name="faceCube" size={26} /></ToolButton>
            </Row>
          </Section>
          <Section title="参考点">
            <Row>
              <RowLabel><Glyph name="check" size={15} />指定点</RowLabel>
              <ToolButton type="button" aria-label="点对话框"><Glyph name="pointDialog" /></ToolButton>
              <SplitButton icon="inferPoint" label="参考点" size={15} />
            </Row>
          </Section>
          <Section title="阵列定义">
            <Row $h={26}>
              <RowLabel as="label" htmlFor="layout">布局</RowLabel>
              <Combo $w={141} $h={26}>
                <Glyph name="ring" />
                <select id="layout" defaultValue="圆形"><option>圆形</option></select>
                <Caret $wide />
              </Combo>
            </Row>
            <Group title="边界定义" />
            <Group title="旋转轴">
              <Row>
                <RowLabel><Glyph name="check" size={15} />指定矢量</RowLabel>
                <ToolButton type="button" $plain aria-label="反向"><Glyph name="reverse" size={15} /></ToolButton>
                <ToolButton type="button" $plain aria-label="矢量对话框"><Glyph name="vectorDialog" /></ToolButton>
                <SplitButton icon="inferVector" label="矢量" size={18} plain />
              </Row>
              <Row>
                <RowLabel $marked><Glyph name="check" size={15} />指定点</RowLabel>
                <ToolButton type="button" $plain aria-label="点对话框"><FocusRing><Glyph name="pointDialog" /></FocusRing></ToolButton>
                <SplitButton icon="crossPoint" label="点" size={20} marked />
              </Row>
            </Group>
            <Group title="斜角方向">
              <Row $h={25}>
                <RowLabel as="label" htmlFor="spacing">间距</RowLabel>
                <Combo $w={141} $h={25}>
                  <select id="spacing" defaultValue="数量和跨距"><option>数量和跨距</option></select>
                  <Caret $wide />
                </Combo>
              </Row>
              <Row $h={23}>
                <RowLabel as="label" htmlFor="count">数量</RowLabel>
                <Combo $w={98} $h={23}><input id="count" defaultValue="3" /><Caret $wide /></Combo>
              </Row>
              <Row $h={25}>
                <RowLabel as="label" htmlFor="span">跨角</RowLabel>
                <Combo $w={141} $h={25}><input id="span" defaultValue="360" /><Unit>°</Unit><Caret $wide /></Combo>
              </Row>
            </Group>
            <Group title="辐射">
              <Row $h={21}><CheckLabel><CheckInput type="checkbox" />创建同心成员</CheckLabel></Row>
            </Group>
            <Group title="阵列增量" />
            <Group title="实例点">
              <Row>
                <RowLabel>选择实例点 (0)</RowLabel>
                <ToolButton type="button" $size={32} $plain aria-label="选择实例点"><Glyph name="target" size={19} /></ToolButton>
              </Row>
            </Group>
            <Row>
              <CheckLabel><CheckInput type="checkbox" />使用电子表格</CheckLabel>
              <ToolButton type="button" $size={32} aria-label="电子表格"><Glyph name="sheet" size={24} /></ToolButton>
            </Row>
            <Group title="方位" />
            <Group title="阵列设置" />
          </Section>
          <Section title="设置" />
          <Section title="预览">
            <Row>
              <CheckLabel><CheckInput type="checkbox" defaultChecked />预览</CheckLabel>
              <span>显示结果</span>
              <ToolButton type="button" $size={32} aria-label="显示结果"><Glyph name="magnifier" size={25} /></ToolButton>
            </Row>
          </Section>
        </Sections>
        <Collapse type="button" aria-label="折叠"><UpCaret /></Collapse>
        <Actions>
          <ActionButton type="submit">&lt; 确定 &gt;</ActionButton>
          <ActionButton type="button" $primary>应用</ActionButton>
          <ActionButton type="button">取消</ActionButton>
        </Actions>
      </Dialog>

      <Markup />
      <Watermark><span>UG<b>爱好者论坛</b></span><span>WWW.UGSNX.COM</span></Watermark>
    </App>
  );
}
